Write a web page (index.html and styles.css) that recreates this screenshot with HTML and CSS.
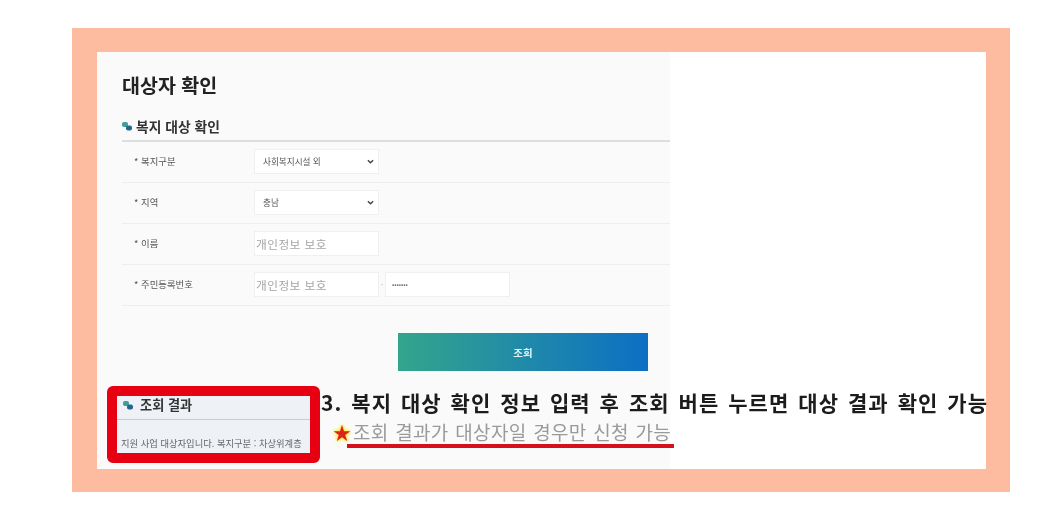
FILE: index.html
```html
<!DOCTYPE html>
<html lang="ko">
<head>
<meta charset="utf-8">
<title>대상자 확인</title>
<link rel="stylesheet" href="styles.css">
</head>
<body>
<div class="frame">
  <section class="panel">
    <h1 class="title">대상자 확인</h1>
    <h2 class="section-title">
      <svg class="bullet" viewBox="0 0 10 9"><rect x="0" y="0" width="6" height="5" rx="2" fill="#3f9d9a"/><rect x="4" y="3.5" width="6" height="5" rx="2" fill="#23668f"/></svg>
      복지 대상 확인
    </h2>
    <div class="form">
      <div class="row">
        <span class="label">* 복지구분</span>
        <div class="field select"><span>사회복지시설 외</span><svg class="caret" viewBox="0 0 8 5"><path d="M1 1l3 3 3-3" fill="none" stroke="#444" stroke-width="1.6"/></svg></div>
      </div>
      <div class="row">
        <span class="label">* 지역</span>
        <div class="field select"><span>충남</span><svg class="caret" viewBox="0 0 8 5"><path d="M1 1l3 3 3-3" fill="none" stroke="#444" stroke-width="1.6"/></svg></div>
      </div>
      <div class="row">
        <span class="label">* 이름</span>
        <div class="field masked">개인정보 보호</div>
      </div>
      <div class="row">
        <span class="label">* 주민등록번호</span>
        <div class="field masked">개인정보 보호</div>
        <span class="dash">-</span>
        <div class="field dots">•••••••</div>
      </div>
    </div>
    <div class="actions"><div class="button">조회</div></div>
    <div class="result">
      <h2 class="section-title result-title">
        <svg class="bullet" viewBox="0 0 10 9"><rect x="0" y="0" width="6" height="5" rx="2" fill="#3f9d9a"/><rect x="4" y="3.5" width="6" height="5" rx="2" fill="#23668f"/></svg>
        조회 결과
      </h2>
      <p class="result-text">지원 사업 대상자입니다. 복지구분 : 차상위계층</p>
    </div>
  </section>
  <div class="highlight"></div>
  <p class="note-main">3. 복지 대상 확인 정보 입력 후 조회 버튼 누르면 대상 결과 확인 가능</p>
  <p class="note-sub"><span class="star">★</span>조회 결과가 대상자일 경우만 신청 가능</p>
  <div class="note-line"></div>
</div>
</body>
</html>
```
FILE: styles.css
```css
* { box-sizing: border-box; }
html, body { margin: 0; padding: 0; background: #fff; }
body {
  width: 1056px;
  height: 513px;
  overflow: hidden;
  padding: 28px 0 0 72px;
  font-family: "Noto Sans CJK KR", "Noto Sans", sans-serif;
}
.frame {
  position: relative;
  width: 938px;
  height: 464px;
  border: solid #fdbb9f;
  border-width: 24px 24px 23px 25px;
  background: #fff;
  filter: blur(0.6px);
}
.panel {
  width: 573px;
  height: 417px;
  background: #fafafa;
  padding: 0 0 0 25px;
  display: flex;
  flex-direction: column;
}
.title {
  margin: 18px 0 0;
  font-size: 19.5px;
  line-height: 30px;
  font-weight: 700;
  color: #222;
}
.section-title {
  margin: 14px 0 0;
  height: 28px;
  width: 548px;
  font-size: 13.8px;
  line-height: 24px;
  font-weight: 700;
  color: #333;
  display: flex;
  align-items: flex-start;
  gap: 4px;
  border-bottom: 2px solid #dcdfe2;
}
.bullet { width: 10px; height: 9px; margin-top: 8px; flex: none; }
.form { width: 548px; }
.row {
  height: 41px;
  display: flex;
  align-items: center;
  border-bottom: 1px solid #eeeeee;
  padding-bottom: 2px;
}
.label {
  width: 132px;
  padding-left: 12px;
  font-size: 9.4px;
  color: #555;
}
.field {
  width: 125px;
  height: 25px;
  background: #fff;
  border: 1px solid #f0f0f0;
  display: flex;
  align-items: center;
  padding-left: 8px;
}
.select {
  font-size: 8.6px;
  color: #555;
  justify-content: space-between;
  padding-right: 4px;
}
.caret { width: 7px; height: 5px; }
.masked { font-size: 11.7px; color: #a4a4a4; letter-spacing: 0.45px; padding-left: 1px; }
.dots { font-size: 6px; font-weight: 700; color: #666; padding-left: 6px; }
.dash { width: 6px; text-align: center; font-size: 8px; color: #bbb; }
.actions { display: flex; padding: 27px 0 0 276px; }
.button {
  width: 250px;
  height: 38px;
  display: flex;
  align-items: center;
  justify-content: center;
  color: #e6f2f5;
  font-size: 10.5px;
  font-weight: 700;
  background: linear-gradient(90deg, #33a58c, #0d6fc4);
}
.result {
  margin: 24px 0 0 -6px;
  width: 195px;
  height: 58px;
  background: #eef2f6;
}
.section-title.result-title {
  margin: 0;
  width: 195px;
  height: 25px;
  padding-left: 7px;
  gap: 7px;
  border-bottom: 1px solid #c8ccd0;
  line-height: 19px;
  font-size: 13.2px;
}
.result-title .bullet { margin-top: 6px; }
.result-text {
  margin: 18px 0 0 5px;
  font-size: 9.3px;
  line-height: 10px;
  color: #666;
  white-space: nowrap;
}
.highlight {
  position: absolute;
  left: 10px;
  top: 334px;
  width: 213px;
  height: 77px;
  border: 10px solid #e70012;
  border-radius: 6px;
}
.note-main {
  position: absolute;
  left: 224px;
  top: 336px;
  margin: 0;
  font-size: 21px;
  line-height: 28px;
  font-weight: 700;
  color: #1c1c1c;
  white-space: nowrap;
  word-spacing: 2px;
  letter-spacing: 1.05px;
}
.note-sub {
  position: absolute;
  left: 236px;
  top: 367px;
  margin: 0;
  font-size: 19px;
  line-height: 26px;
  color: #9a9a9a;
  white-space: nowrap;
  word-spacing: 1.1px;
  letter-spacing: 0.3px;
  display: flex;
  align-items: center;
}
.star {
  color: #d8261a;
  text-shadow: 0 0 2px #ffe94a, 0 0 3px #ffe94a, 0 0 3px #ffe94a, 0 0 4px #ffe94a;
  font-size: 18px;
  width: 20px;
}
.note-line {
  position: absolute;
  left: 250px;
  top: 392px;
  width: 327px;
  height: 4px;
  background: #d3101c;
}
```
